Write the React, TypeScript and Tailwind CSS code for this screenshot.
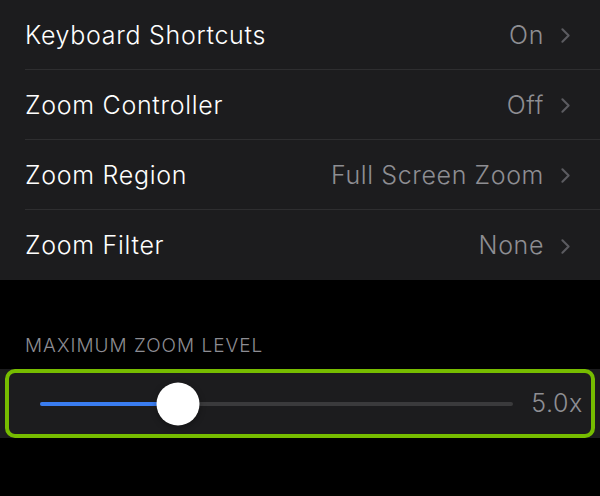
import { ChevronRight } from 'lucide-react';

const rows = [
  { label: 'Keyboard Shortcuts', value: 'On' },
  { label: 'Zoom Controller', value: 'Off' },
  { label: 'Zoom Region', value: 'Full Screen Zoom' },
  { label: 'Zoom Filter', value: 'None' },
];

export default function App() {
  const pct = 29.2;
  return (
    <div className="w-[600px] h-[496px] bg-black overflow-hidden" style={{ fontFamily: 'Inter, "Noto Sans", sans-serif' }}>
      {/* settings list */}
      <div className="bg-[#1c1c1e]">
        {rows.map((r, i) => (
          <div key={r.label} className="pl-[25px] h-[70px]">
            <div className={`h-full flex items-center pr-[22px] pt-[2px] ${i < rows.length - 1 ? 'border-b border-[#2e2e30]' : ''}`}>
              <span className="flex-1 text-[25px] font-light text-white tracking-[0.7px]">{r.label}</span>
              <span className="text-[25px] font-light text-[#8e8e93] tracking-[0.6px]">{r.value}</span>
              <ChevronRight className="ml-[9px] w-[25px] h-[25px] text-[#5b5b60]" strokeWidth={2} />
            </div>
          </div>
        ))}
      </div>

      {/* section header */}
      <div className="pl-[25px] pt-[56px] pb-[13px] text-[19px] font-light leading-[20px] text-[#8d8d93] tracking-[1px]">
        MAXIMUM ZOOM LEVEL
      </div>

      {/* slider */}
      <div className="bg-[#1c1c1e] h-[69px] px-[5px]">
        <div className="h-full border-4 border-[#76bc00] rounded-[10px] flex items-center pl-[31px] pr-[8px]">
          <div className="relative flex-1 h-[4px] rounded-full bg-[#3a3a3c]">
            <div className="absolute left-0 top-0 h-full rounded-full bg-[#3a7df0]" style={{ width: `${pct}%` }} />
            <div
              className="absolute top-1/2 w-[43px] h-[43px] -translate-x-1/2 -translate-y-1/2 rounded-full bg-white shadow-[0_2px_6px_rgba(0,0,0,0.35)]"
              style={{ left: `${pct}%` }}
            />
          </div>
          <span className="ml-[18px] text-[25px] font-light text-[#8e8e93] tracking-[0.6px]">5.0x</span>
        </div>
      </div>
    </div>
  );
}
